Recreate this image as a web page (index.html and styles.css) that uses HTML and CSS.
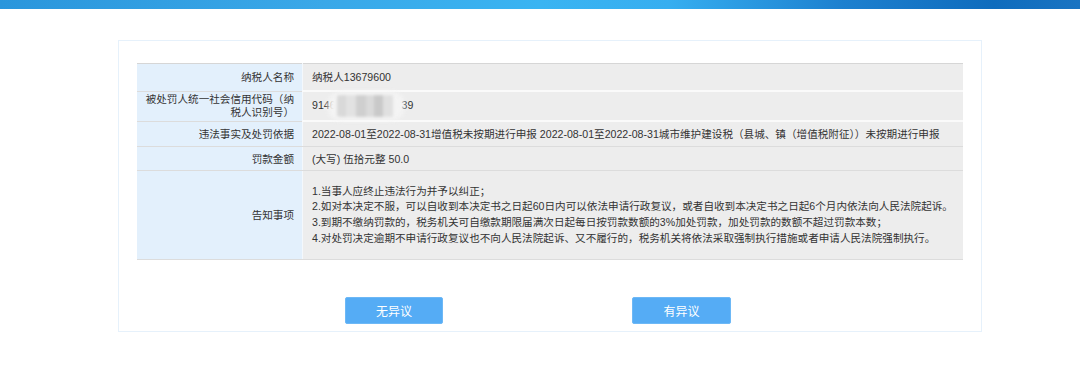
FILE: index.html
```html
<!DOCTYPE html>
<html lang="zh-CN">
<head>
    <meta charset="UTF-8">
    <meta name="viewport" content="width=device-width, initial-scale=1.0">
    <title>税务行政处罚告知</title>
    <link rel="stylesheet" href="styles.css">
</head>
<body>

<div class="banner"></div>

<div class="panel">
    <table class="info-table">
        <tr class="row-name">
            <td class="label">纳税人名称</td>
            <td class="value">纳税人13679600</td>
        </tr>
        <tr class="row-code">
            <td class="label">被处罚人统一社会信用代码（纳税人识别号）</td>
            <td class="value">9146<span class="mosaic"></span>39</td>
        </tr>
        <tr class="row-fact">
            <td class="label">违法事实及处罚依据</td>
            <td class="value">2022-08-01至2022-08-31增值税未按期进行申报 2022-08-01至2022-08-31城市维护建设税（县城、镇（增值税附征））未按期进行申报</td>
        </tr>
        <tr class="row-amount">
            <td class="label">罚款金额</td>
            <td class="value">(大写) 伍拾元整 50.0</td>
        </tr>
        <tr class="row-notice">
            <td class="label">告知事项</td>
            <td class="value">
                <p>1.当事人应终止违法行为并予以纠正；</p>
                <p>2.如对本决定不服，可以自收到本决定书之日起60日内可以依法申请行政复议，或者自收到本决定书之日起6个月内依法向人民法院起诉。</p>
                <p>3.到期不缴纳罚款的，税务机关可自缴款期限届满次日起每日按罚款数额的3%加处罚款，加处罚款的数额不超过罚款本数；</p>
                <p>4.对处罚决定逾期不申请行政复议也不向人民法院起诉、又不履行的，税务机关将依法采取强制执行措施或者申请人民法院强制执行。</p>
            </td>
        </tr>
    </table>

    <div class="action-buttons">
        <button class="btn">无异议</button>
        <button class="btn btn-wide">有异议</button>
    </div>
</div>

</body>
</html>
```

FILE: styles.css
```css
body {
    margin: 0;
    font-family: 'Liberation Sans', 'Noto Sans CJK SC', sans-serif;
    background-color: #fff;
    color: #333;
}

.banner {
    height: 9px;
    background: linear-gradient(90deg, #2a96dc 0%, #3aa8e8 30%, #3ab4f2 50%, #36aef0 62%, #1d80cf 78%, #0f6cbd 92%, #1a74c2 100%);
}

.panel {
    width: 826px;
    margin: 31px 0 0 118px;
    padding: 22px 18px 7px 18px;
    border: 1px solid #e6f1fb;
}

.info-table {
    width: 100%;
    border-collapse: collapse;
    font-size: 10.6px;
    border-top: 1px solid #d6d6d6;
    border-bottom: 1px solid #d6d6d6;
}

.info-table td {
    border-bottom: 1px solid #dcdcdc;
    line-height: 14px;
}

.label {
    width: 149px;
    padding: 0 8px;
    text-align: right;
    background-color: #e3f0fc;
    border-right: 1px solid #f4f8fc;
}

.value {
    padding: 0 9px;
    background-color: #ededed;
}

.row-name td { height: 26px; }
.row-code td { height: 28px; line-height: 13px; }
.row-fact td { height: 24px; }
.row-amount td { height: 23px; }
.row-notice td { height: 88px; }

.row-name .value,
.row-code .value {
    border-bottom: 2px solid #fafafa;
}

.row-notice p {
    margin: 0;
    line-height: 15.6px;
}

.mosaic {
    display: inline-block;
    width: 70px;
    height: 22px;
    margin: 0 1px 0 -5px;
    vertical-align: middle;
    border-radius: 10px;
    background:
        linear-gradient(90deg, #f4f4f4 0 8%, #d9d9d9 8% 22%, #e2e2e2 22% 36%, #cfcfcf 36% 50%, #dadada 50% 62%, #c9c9c9 62% 74%, #e0e0e0 74% 88%, #f4f4f4 88%);
    box-shadow: 0 0 4px 3px #f6f6f6;
    filter: blur(1.5px);
}

.action-buttons {
    display: flex;
    gap: 189px;
    margin-top: 37px;
    padding-left: 208px;
}

.btn {
    width: 98px;
    height: 27px;
    padding: 0;
    font-family: 'Noto Sans CJK SC', sans-serif;
    font-size: 12px;
    color: #fff;
    background-color: #55acf5;
    border: 1px solid #6db8f6;
    border-radius: 2px;
    cursor: pointer;
}

.btn-wide {
    width: 99px;
}
```
